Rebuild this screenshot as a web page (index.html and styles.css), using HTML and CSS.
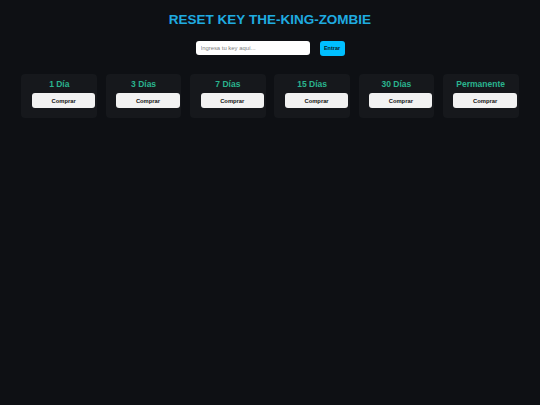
FILE: index.html
```html
<!DOCTYPE html>
<html lang="es">
<head>
<meta charset="utf-8">
<title>Reset Key</title>
<link rel="stylesheet" href="styles.css">
</head>
<body>
<main class="page">
  <h1 class="title">RESET KEY THE-KING-ZOMBIE</h1>
  <div class="login">
    <input class="key-input" type="text" placeholder="Ingresa tu key aquí...">
    <button class="enter-btn">Entrar</button>
  </div>
  <div class="plans">
    <div class="plan"><h3 class="plan-name">1 Día</h3><button class="buy-btn">Comprar</button></div>
    <div class="plan"><h3 class="plan-name">3 Días</h3><button class="buy-btn">Comprar</button></div>
    <div class="plan"><h3 class="plan-name">7 Días</h3><button class="buy-btn">Comprar</button></div>
    <div class="plan"><h3 class="plan-name">15 Días</h3><button class="buy-btn">Comprar</button></div>
    <div class="plan"><h3 class="plan-name">30 Días</h3><button class="buy-btn">Comprar</button></div>
    <div class="plan"><h3 class="plan-name">Permanente</h3><button class="buy-btn">Comprar</button></div>
  </div>
</main>
</body>
</html>
```
FILE: styles.css
```css
html, body {
  margin: 0;
  padding: 0;
  background: #0e1014;
  min-height: 100%;
}
body {
  font-family: "Liberation Sans", Arial, sans-serif;
  color: #e0e0e0;
}
.page {
  text-align: center;
  padding-top: 11.5px;
}
.title {
  margin: 0;
  font-size: 13.5px;
  line-height: 15.5px;
  font-weight: bold;
  color: #1fabe0;
}
.login {
  display: flex;
  justify-content: center;
  align-items: center;
  gap: 10px;
  margin-top: 14px;
}
.key-input {
  box-sizing: border-box;
  width: 114px;
  height: 14px;
  padding: 0 5px;
  border: none;
  border-radius: 3px;
  background: #ffffff;
  font-family: "Liberation Sans", Arial, sans-serif;
  font-size: 5.9px;
  color: #333;
  outline: none;
}
.key-input::placeholder {
  color: #808080;
}
.enter-btn {
  box-sizing: border-box;
  width: 25px;
  height: 14.5px;
  padding: 0;
  border: none;
  border-radius: 3px;
  background: #00bfff;
  color: #0b1a22;
  font-family: "Liberation Sans", Arial, sans-serif;
  font-size: 5.5px;
  font-weight: bold;
}
.plans {
  display: flex;
  justify-content: center;
  gap: 8.6px;
  margin-top: 18.3px;
}
.plan {
  box-sizing: border-box;
  width: 75.7px;
  height: 44.4px;
  padding: 5.5px 10.6px 0;
  background: #16181c;
  border-radius: 4px;
  text-align: center;
}
.plan-name {
  margin: 0 0 4px;
  font-size: 8.5px;
  line-height: 10px;
  font-weight: bold;
  color: #2ab48e;
  white-space: nowrap;
}
.buy-btn {
  box-sizing: border-box;
  display: block;
  width: 63.3px;
  height: 14.6px;
  padding: 0;
  border: none;
  border-radius: 3px;
  background: #f2f2f2;
  color: #111;
  font-family: "Liberation Sans", Arial, sans-serif;
  font-size: 5.8px;
  font-weight: bold;
}
```
